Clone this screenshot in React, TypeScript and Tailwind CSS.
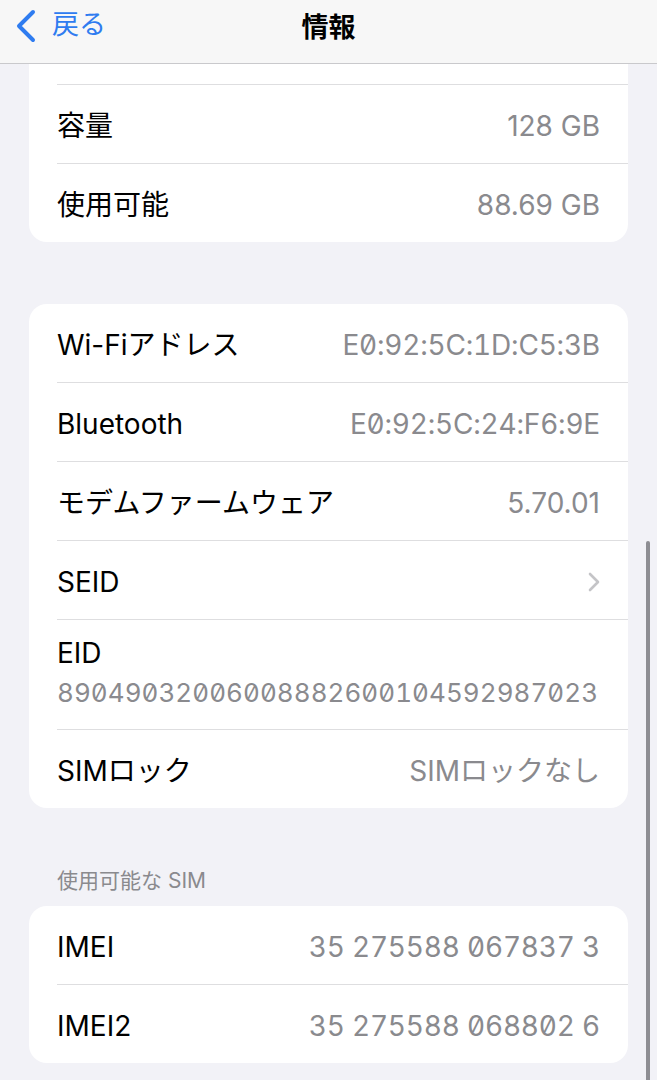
import React from 'react';

const font = { fontFamily: 'Inter, "Noto Sans CJK JP", sans-serif' };

type Row = { label: string; value?: string; mono?: boolean; chevron?: boolean };

const Chevron: React.FC = () => (
  <svg width="12" height="20" viewBox="0 0 12 20" fill="none">
    <path d="M2 2l8 8-8 8" stroke="#c4c4c7" strokeWidth="2.6" strokeLinecap="round" strokeLinejoin="round" />
  </svg>
);

const ListRow: React.FC<{ row: Row; last?: boolean }> = ({ row, last }) => (
  <div className={`ml-[28px] flex items-center pt-[3px] pr-[28px] ${last ? 'h-[78px]' : 'h-[79px] border-b border-[#dedee0]'}`}>
    <span className="text-[28px] text-black">{row.label}</span>
    <span className="flex-1" />
    {row.value && (
      <span className={`text-[28px] text-[#8a8a8e] ${row.mono ? 'slashed-zero tabular-nums tracking-[-0.2px]' : ''}`}>
        {row.value}
      </span>
    )}
    {row.chevron && <Chevron />}
  </div>
);

const App: React.FC = () => {
  const storage: Row[] = [
    { label: '容量', value: '128 GB' },
    { label: '使用可能', value: '88.69 GB' },
  ];

  const network: Row[] = [
    { label: 'Wi-Fiアドレス', value: 'E0:92:5C:1D:C5:3B', mono: true },
    { label: 'Bluetooth', value: 'E0:92:5C:24:F6:9E', mono: true },
    { label: 'モデムファームウェア', value: '5.70.01' },
    { label: 'SEID', chevron: true },
  ];

  const sims: Row[] = [
    { label: 'IMEI', value: '35 275588 067837 3', mono: true },
    { label: 'IMEI2', value: '35 275588 068802 6', mono: true },
  ];

  return (
    <div className="relative h-[1080px] w-[657px] overflow-hidden bg-[#f2f2f7]" style={font}>
      {/* nav bar */}
      <div className="relative flex h-[64px] items-center border-b border-[#c9c9cc] bg-[#f7f7f7] pb-[12px]">
        <div className="ml-[14px] flex items-center gap-[14px]">
          <svg width="24" height="34" viewBox="0 0 24 34" fill="none">
            <path d="M19 3L5 17l14 14" stroke="#2f7cf0" strokeWidth="4" strokeLinecap="round" strokeLinejoin="round" />
          </svg>
          <span className="text-[27px] text-[#2f7cf0]">戻る</span>
        </div>
        <div className="absolute inset-x-0 top-[8px] text-center text-[27px] font-bold text-black">情報</div>
      </div>

      {/* storage card, scrolled under the nav */}
      <div className="mx-[29px] rounded-b-[18px] bg-white">
        <div className="ml-[28px] h-[21px] border-b border-[#dedee0]" />
        {storage.map((r, i) => (
          <ListRow key={r.label} row={r} last={i === storage.length - 1} />
        ))}
      </div>

      {/* network card */}
      <div className="mx-[29px] mt-[62px] rounded-[18px] bg-white">
        {network.map((r) => (
          <ListRow key={r.label} row={r} />
        ))}
        <div className="ml-[28px] flex flex-col gap-[6px] border-b border-[#dedee0] pt-[16px] pb-[19px] pr-[28px]">
          <span className="text-[28px] leading-[34px] text-black">EID</span>
          <span className="text-[26px] leading-[34px] tracking-[0.05px] text-[#8a8a8e] slashed-zero tabular-nums">
            89049032006008882600104592987023
          </span>
        </div>
        <ListRow row={{ label: 'SIMロック', value: 'SIMロックなし' }} last />
      </div>

      {/* sims */}
      <div className="mt-[61px] mb-[13px] ml-[57px] text-[21px] leading-[24px] text-[#8a8a8e]">使用可能な SIM</div>
      <div className="mx-[29px] rounded-[18px] bg-white">
        {sims.map((r, i) => (
          <ListRow key={r.label} row={r} last={i === sims.length - 1} />
        ))}
      </div>

      {/* scroll indicator */}
      <div className="absolute top-[541px] right-[7px] h-[560px] w-[4px] rounded-full bg-[#8e8e93]" />
    </div>
  );
};

export default App;
